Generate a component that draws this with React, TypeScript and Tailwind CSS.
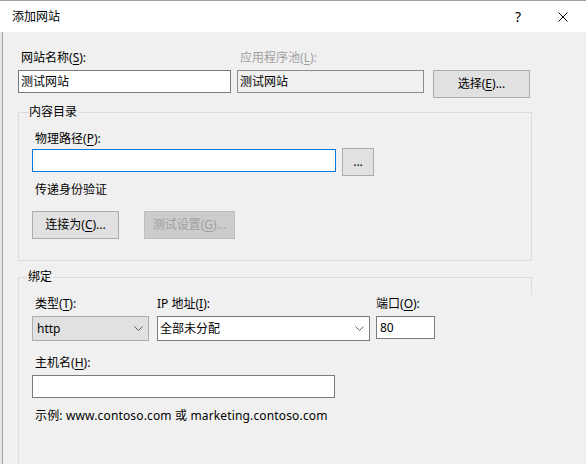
import React from 'react';

const font = "font-['Noto_Sans','Noto_Sans_CJK_SC',sans-serif]";

const Label = ({ children, disabled, className = '' }: { children: React.ReactNode; disabled?: boolean; className?: string }) => (
    <div className={`h-[16px] leading-[16px] text-[12px] whitespace-nowrap ${disabled ? 'text-[#a0a0a0]' : 'text-black'} ${className}`}>
        {children}
    </div>
);

const Key = ({ k }: { k: string }) => (
    <>(<u className="underline-offset-2">{k}</u>)</>
);

const Chevron = () => (
    <svg width="9" height="5" viewBox="0 0 9 5" className="shrink-0">
        <polyline points="0.5,0.5 4.5,4.5 8.5,0.5" fill="none" stroke="#606060" strokeWidth="1" />
    </svg>
);

const WinButton = ({ children, className = '', disabled }: { children: React.ReactNode; className?: string; disabled?: boolean }) => (
    <button
        type="button"
        disabled={disabled}
        className={`h-[28px] flex items-center justify-center text-[12px] border ${disabled ? 'bg-[#cccccc] border-[#bfbfbf] text-[#a0a0a0]' : 'bg-[#e1e1e1] border-[#adadad] text-black'} ${className}`}
    >
        {children}
    </button>
);

export default function App() {
    return (
        <div className={`w-[586px] h-[464px] overflow-hidden bg-[#f0f0f0] flex flex-col ${font}`}>
            {/* 标题栏 */}
            <div className="h-[32px] shrink-0 bg-white border-t border-[#a0a0a0] flex items-center">
                <span className="pl-[12px] text-[12px] leading-[16px] text-black">添加网站</span>
                <span className="ml-auto w-[12px] text-[14px] leading-[16px] text-black text-center">?</span>
                <div className="ml-[34px] mr-[18px] w-[10px] h-[10px]">
                    <svg width="10" height="10" viewBox="0 0 10 10">
                        <path d="M0.5 0.5 L9.5 9.5 M9.5 0.5 L0.5 9.5" stroke="#000" strokeWidth="1" />
                    </svg>
                </div>
            </div>

            <div className="flex-1 flex">
                <div className="w-[2px] bg-[#e6e6e6]" />
                <div className="w-[1px] bg-[#a0a0a0]" />
                <div className="flex-1 flex flex-col">
                    {/* 网站名称 / 应用程序池 */}
                    <div className="flex items-start ml-[15px] mt-[18px]">
                        <div className="w-[213px]">
                            <Label className="pl-[3px]">网站名称<Key k="S" />:</Label>
                            <div className="mt-[4px] h-[23px] bg-white border border-[#7a7a7a] flex items-center pl-[2px] text-[12px]">测试网站</div>
                        </div>
                        <div className="w-[187px] ml-[6px]">
                            <Label disabled className="pl-[3px]">应用程序池<Key k="L" />:</Label>
                            <div className="mt-[4px] h-[23px] border border-[#8c8c8c] flex items-center pl-[2px] text-[12px]">测试网站</div>
                        </div>
                        <WinButton className="w-[97px] ml-[9px] mt-[20px]">选择<Key k="E" />...</WinButton>
                    </div>

                    {/* 内容目录 */}
                    <div className="ml-[15px] w-[514px] mt-[14px] h-[149px] border border-[#dcdcdc]">
                        <div className="h-[16px] -mt-[9px] leading-[16px] ml-[9px] px-[1px] bg-[#f0f0f0] w-fit text-[12px]">内容目录</div>
                        <div className="pl-[13px]">
                            <Label className="mt-[11px] pl-[3px]">物理路径<Key k="P" />:</Label>
                            <div className="flex items-start mt-[1px]">
                                <div className="mt-[1px] w-[304px] h-[23px] bg-white border border-[#0078d7]" />
                                <WinButton className="ml-[6px] w-[32px] text-[10px]">...</WinButton>
                            </div>
                            <Label className="mt-[6px] pl-[3px]">传递身份验证</Label>
                            <div className="flex mt-[13px]">
                                <WinButton className="w-[87px]">连接为<Key k="C" />...</WinButton>
                                <WinButton disabled className="w-[91px] ml-[25px]">测试设置<Key k="G" />...</WinButton>
                            </div>
                        </div>
                    </div>

                    {/* 绑定 */}
                    <div className="ml-[15px] w-[514px] mt-[16px] flex-1 border-l border-[#dcdcdc]">
                        <div className="h-[18px] border-t border-r border-[#dcdcdc]">
                            <div className="h-[16px] -mt-[9px] leading-[16px] ml-[8px] px-[1px] bg-[#f0f0f0] w-fit text-[12px]">绑定</div>
                        </div>
                        <div className="pl-[13px]">
                            <div className="flex items-start mt-[1px]">
                                <div className="w-[117px]">
                                    <Label className="pl-[3px]">类型<Key k="T" />:</Label>
                                    <div className="mt-[4px] h-[25px] bg-[#e1e1e1] border border-[#adadad] flex items-center pl-[4px] pr-[5px] text-[12px]">
                                        <span className="flex-1">http</span>
                                        <Chevron />
                                    </div>
                                </div>
                                <div className="w-[213px] ml-[8px]">
                                    <Label>IP 地址<Key k="I" />:</Label>
                                    <div className="mt-[4px] h-[25px] bg-white border border-[#7a7a7a] flex items-center pl-[2px] pr-[5px] text-[12px]">
                                        <span className="flex-1">全部未分配</span>
                                        <Chevron />
                                    </div>
                                </div>
                                <div className="w-[59px] ml-[6px]">
                                    <Label>端口<Key k="O" />:</Label>
                                    <div className="mt-[4px] h-[23px] bg-white border border-[#7a7a7a] flex items-center pl-[3px] text-[12px]">80</div>
                                </div>
                            </div>
                            <Label className="mt-[14px] pl-[3px]">主机名<Key k="H" />:</Label>
                            <div className="mt-[4px] w-[303px] h-[23px] bg-white border border-[#7a7a7a]" />
                            <Label className="mt-[10px] pl-[3px] tracking-[0.15px]">示例: www.contoso.com 或 marketing.contoso.com</Label>
                        </div>
                    </div>
                </div>
            </div>
        </div>
    );
}
